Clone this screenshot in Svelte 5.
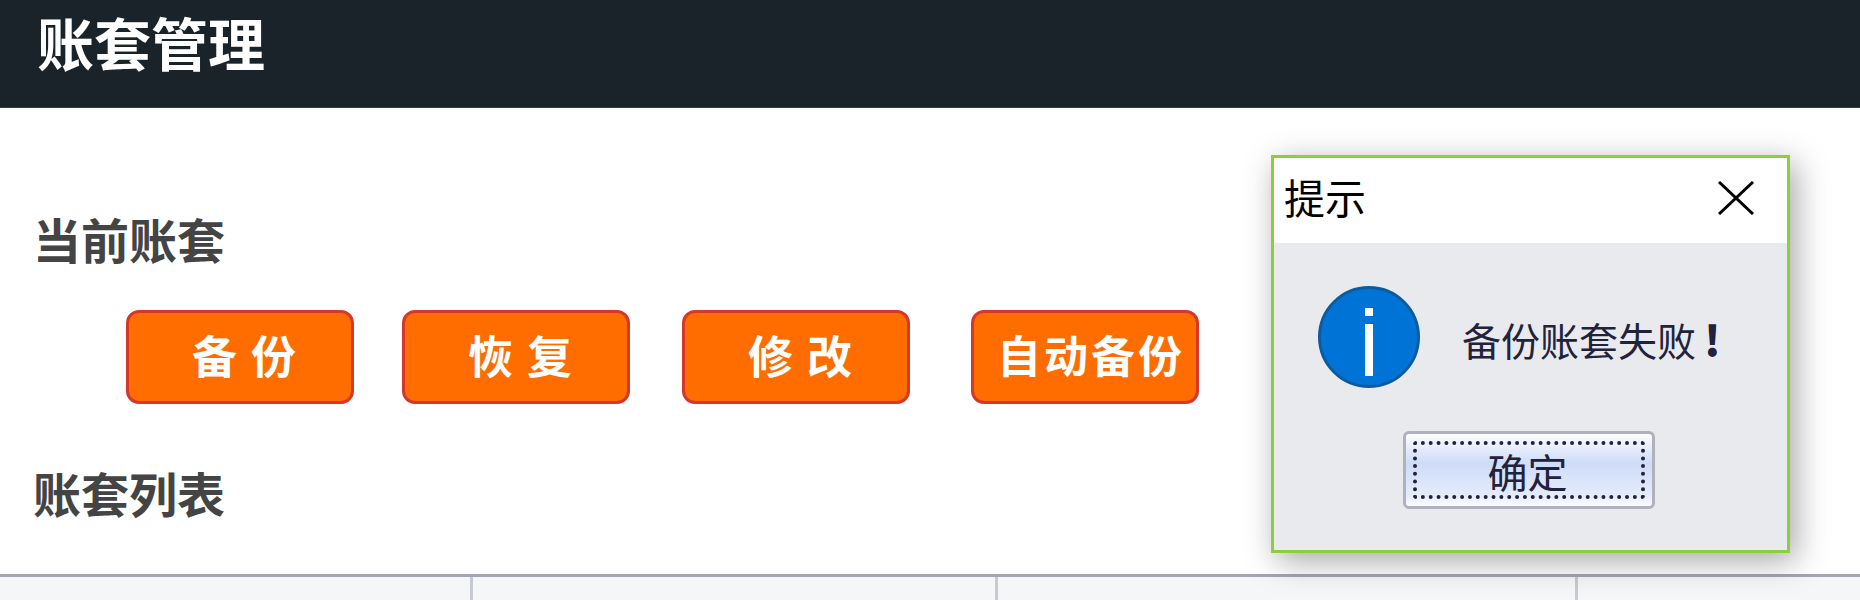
<script>
  const actions = [
    { label: '备 份', cls: '' },
    { label: '恢 复', cls: '' },
    { label: '修 改', cls: 'gap-m' },
    { label: '自动备份', cls: 'gap-l auto' }
  ];
  const columns = ['', '', '', ''];
</script>

<div class="page">
  <header class="topbar">
    <h1>账套管理</h1>
  </header>

  <main class="content">
    <h2 class="current">当前账套</h2>
    <div class="actions">
      {#each actions as action}
        <button class="action {action.cls}"><span class="label">{action.label}</span></button>
      {/each}
    </div>
    <h2 class="list">账套列表</h2>
  </main>

  <div class="table-head">
    {#each columns as col}
      <div class="th">{col}</div>
    {/each}
  </div>

  <div class="dialog" role="dialog">
    <div class="dialog-title">
      <span>提示</span>
      <svg class="close" width="36" height="34" viewBox="0 0 36 34" aria-hidden="true">
        <path d="M1 1 L35 33 M35 1 L1 33" stroke="#000" stroke-width="3" fill="none" />
      </svg>
    </div>
    <div class="dialog-body">
      <div class="message">
        <svg width="102" height="102" viewBox="0 0 102 102" aria-hidden="true">
          <circle cx="51" cy="51" r="49.5" fill="#0074d6" stroke="#0b5c9f" stroke-width="3" />
          <rect x="47" y="22" width="8" height="8" fill="#fff" />
          <rect x="47" y="38" width="8" height="52" fill="#fff" />
        </svg>
        <span>备份账套失败<b class="bang">!</b></span>
      </div>
      <button class="ok"><span class="ok-inner">确定</span></button>
    </div>
  </div>
</div>

<style>
  :global(body) {
    margin: 0;
    background: #fff;
  }

  .page {
    position: relative;
    height: 600px;
    overflow: hidden;
    font-family: "Noto Sans CJK SC", "Liberation Sans", sans-serif;
  }

  .topbar {
    height: 108px;
    box-sizing: border-box;
    padding: 0 0 0 37px;
    background: #1a232a;
    border-bottom: 1px solid #30373d;
  }

  h1 {
    margin: 0;
    font-size: 57px;
    line-height: 82px;
    font-weight: 700;
    color: #fff;
  }

  .content {
    padding: 0 0 0 33px;
  }

  h2 {
    margin: 0;
    font-size: 48px;
    line-height: 60px;
    font-weight: 700;
    color: #444;
  }

  .current {
    padding-top: 100px;
  }

  .actions {
    display: flex;
    gap: 48px;
    margin: 42px 0 0 93px;
  }

  .action {
    width: 228px;
    height: 94px;
    box-sizing: border-box;
    padding: 0 0 0 10px;
    background: #ff6d00;
    border: 3px solid #d5372b;
    border-radius: 13px;
    color: #fff;
    font-family: inherit;
    font-size: 45px;
    font-weight: 700;
    letter-spacing: 2px;
    white-space: nowrap;
  }

  .label {
    display: block;
    margin-top: -6px;
  }

  .action.gap-m {
    margin-left: 4px;
  }

  .action.gap-l {
    margin-left: 13px;
  }

  .action.auto {
    padding: 0 0 0 12px;
    font-size: 44px;
    letter-spacing: 3px;
  }

  .list {
    padding-top: 58px;
  }

  .table-head {
    position: absolute;
    left: 0;
    right: 0;
    top: 574px;
    display: grid;
    grid-template-columns: 473px 525px 580px 1fr;
    height: 26px;
    border-top: 3px solid #a3a5b0;
    background: #f5f6f8;
  }

  .th {
    border-right: 3px solid #c8cad2;
  }

  .th:last-child {
    border-right: 0;
  }

  .dialog {
    position: absolute;
    left: 1271px;
    top: 155px;
    width: 519px;
    height: 398px;
    box-sizing: border-box;
    display: flex;
    flex-direction: column;
    background: #e9eaee;
    border: 3px solid #8ccf3c;
    box-shadow: 6px 8px 30px rgba(0, 0, 0, 0.35);
  }

  .dialog-title {
    height: 85px;
    flex: none;
    box-sizing: border-box;
    display: flex;
    align-items: center;
    justify-content: space-between;
    padding: 0 33px 10px 10px;
    background: #fff;
    color: #000;
    font-size: 41px;
  }

  .close {
    margin-top: 4px;
  }

  .dialog-body {
    flex: 1;
    display: flex;
    flex-direction: column;
    align-items: center;
    color: #22223a;
  }

  .message {
    align-self: stretch;
    display: flex;
    align-items: center;
    gap: 42px;
    padding: 43px 0 0 44px;
    font-size: 39px;
  }

  .message svg {
    flex: none;
  }

  .bang {
    margin-left: 8px;
    font-size: 42px;
    font-weight: 900;
  }

  .ok {
    width: 252px;
    height: 78px;
    box-sizing: border-box;
    margin: 43px 4px 0 0;
    padding: 7px;
    background: linear-gradient(#fdfdff 0%, #cfdcf8 40%, #e4ebfc 85%, #fbfcff 100%);
    border: 3px solid #b0b1bd;
    border-radius: 6px;
    color: #22223a;
    font-family: inherit;
    font-size: 40px;
  }

  .ok-inner {
    display: flex;
    align-items: center;
    justify-content: center;
    height: 100%;
    box-sizing: border-box;
    padding: 2px 2px 0 0;
    border: 4px dotted #22223a;
    border-radius: 4px;
  }
</style>
